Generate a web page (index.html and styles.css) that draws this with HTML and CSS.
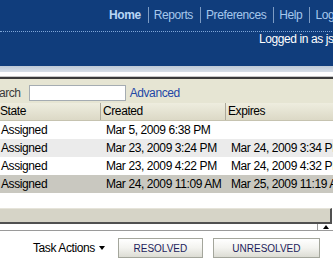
FILE: index.html
```html
<!DOCTYPE html>
<html lang="en">
  <head>
    <meta charset="UTF-8" />
    <title>Worklist</title>
    <link rel="stylesheet" href="styles.css">
  </head>
  <body>
    <div class="page">
      <header class="masthead">
        <nav class="nav">
          <a class="nav-item active" href="#">Home</a>
          <a class="nav-item" href="#">Reports</a>
          <a class="nav-item" href="#">Preferences</a>
          <a class="nav-item" href="#">Help</a>
          <a class="nav-item" href="#">Logout</a>
        </nav>
        <div class="user">Logged in as jstaff</div>
      </header>
      <div class="band"></div>

      <section class="worklist">
        <div class="toolbar">
          <label class="search-label" for="search">Search</label>
          <input class="search" id="search" type="text">
          <a class="advanced" href="#">Advanced</a>
        </div>

        <div class="row head">
          <div class="cell">State</div>
          <div class="cell">Created</div>
          <div class="cell">Expires</div>
        </div>
        <div class="row">
          <div class="cell">Assigned</div>
          <div class="cell">Mar 5, 2009 6:38 PM</div>
          <div class="cell"></div>
        </div>
        <div class="row alt">
          <div class="cell">Assigned</div>
          <div class="cell">Mar 23, 2009 3:24 PM</div>
          <div class="cell">Mar 24, 2009 3:34 PM</div>
        </div>
        <div class="row">
          <div class="cell">Assigned</div>
          <div class="cell">Mar 23, 2009 4:22 PM</div>
          <div class="cell">Mar 24, 2009 4:32 PM</div>
        </div>
        <div class="row selected">
          <div class="cell">Assigned</div>
          <div class="cell">Mar 24, 2009 11:09 AM</div>
          <div class="cell">Mar 25, 2009 11:19 AM</div>
        </div>

        <div class="hscroll"></div>
        <div class="scroll-foot">
          <span class="scroll-box"><span class="up"></span></span>
        </div>
      </section>

      <div class="actions">
        <span class="task-actions">Task Actions</span>
        <span class="caret"></span>
        <button class="btn resolved">RESOLVED</button>
        <button class="btn unresolved">UNRESOLVED</button>
      </div>
    </div>
  </body>
</html>
```

FILE: styles.css
```css
html,
body {
  margin: 0;
  overflow: hidden;
}
body {
  font-family: "Liberation Sans", Arial, sans-serif;
  font-size: 12px;
  letter-spacing: -0.4px;
  color: #000;
  background: #fff;
}
.page {
  width: 400px;
}

/* masthead */
.masthead {
  background: #103d7c;
  height: 66px;
}
.nav {
  display: flex;
  padding: 7px 0 8px 109px;
  line-height: 16px;
  border-bottom: 1px dotted #7fa6d8;
}
.nav-item {
  color: #a6c8ec;
  text-decoration: none;
}
.nav-item + .nav-item {
  margin-left: 7px;
  padding-left: 5px;
  border-left: 1px solid #7d9cc4;
}
.nav-item.active {
  font-weight: bold;
  color: #b8d6f6;
}
.user {
  padding-left: 259px;
  line-height: 14px;
  color: #fff;
}
.band {
  height: 11px;
  background: linear-gradient(#bcc8d6 0, #d8dfe8 6px, #fff 6px, #fff 10px, #c8c8c8 10px);
}

/* worklist */
.worklist {
  border-top: 2px solid #3a3a3a;
}
.toolbar {
  display: flex;
  align-items: center;
  height: 16px;
  padding: 6px 0 2px;
  background: #e6e5d3;
}
.search-label {
  margin-left: -15px;
  color: #3a3a3a;
}
.search {
  box-sizing: border-box;
  width: 97px;
  height: 16px;
  margin: 0 0 0 8px;
  padding: 0;
  border: 1px solid #a5acb2;
  background: #fff;
}
.advanced {
  margin-left: 4px;
  color: #2346a6;
  text-decoration: none;
}
.row {
  display: grid;
  grid-template-columns: 100px 125px 140px;
  height: 18px;
  line-height: 18px;
}
.row .cell {
  padding-left: 6px;
  white-space: nowrap;
}
.row .cell:first-child {
  padding-left: 1px;
}
.row.head {
  height: 17px;
  line-height: 17px;
  background: linear-gradient(#eeeddf, #dcd9c6);
  border-bottom: 1px solid #c6c3b0;
}
.row.head .cell:first-child {
  padding-left: 0;
}
.row.head .cell + .cell {
  padding-left: 2px;
  border-left: 1px solid #aca899;
}
.row.alt {
  background: #ebebeb;
}
.row.selected {
  background: #c9c8c0;
}
.hscroll {
  box-sizing: border-box;
  width: 332px;
  height: 16px;
  margin-top: 15px;
  background: #d6d4c7;
  border-top: 1px solid #e6e4da;
  border-bottom: 2px solid #505050;
  border-right: 2px solid #505050;
}
.scroll-foot {
  display: flex;
  justify-content: flex-end;
  height: 6px;
  border-bottom: 1px solid #9a9a9a;
}
.scroll-box {
  display: flex;
  justify-content: center;
  align-items: center;
  width: 15px;
  border-left: 1px solid #9a9a9a;
  margin-right: 67px;
}
.up {
  width: 0;
  height: 0;
  border-left: 3px solid transparent;
  border-right: 3px solid transparent;
  border-bottom: 4px solid #000;
}

/* actions */
.actions {
  display: flex;
  align-items: center;
  margin-top: 7px;
  padding-left: 33px;
  height: 20px;
}
.caret {
  margin-left: 4px;
  width: 0;
  height: 0;
  border-left: 3px solid transparent;
  border-right: 3px solid transparent;
  border-top: 4px solid #000;
}
.btn {
  box-sizing: border-box;
  height: 20px;
  padding: 0;
  font-family: inherit;
  font-size: 10px;
  letter-spacing: 0;
  color: #1d1d5c;
  border: 1px solid #a4a69c;
  border-radius: 0;
  background: linear-gradient(#ffffff, #f3f3ef 50%, #dcdcd4);
}
.resolved {
  width: 85px;
  margin-left: 13px;
}
.unresolved {
  width: 107px;
  margin-left: 10px;
}
```
